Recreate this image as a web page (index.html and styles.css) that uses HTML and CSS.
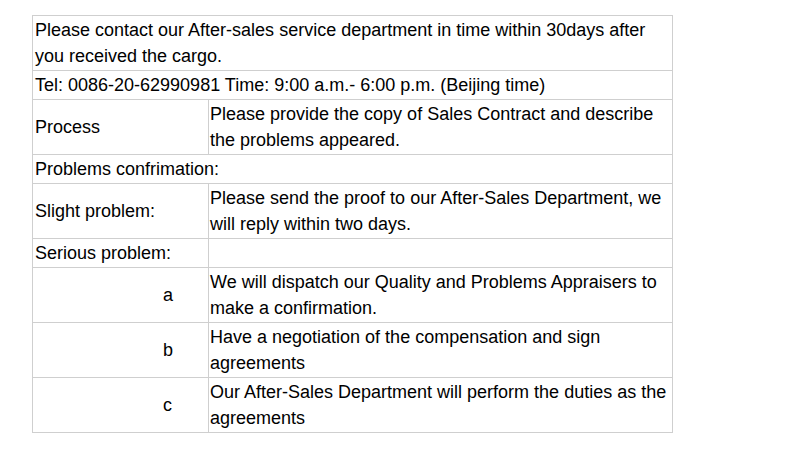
FILE: index.html
```html
<!DOCTYPE html>
<html>
<head>
<meta charset="utf-8">
<link rel="stylesheet" href="styles.css">
</head>
<body>
<table class="info">
  <colgroup><col class="col1"><col class="col2"></colgroup>
  <tr><td colspan="2">Please contact our After-sales service department in time within 30days after you received the cargo.</td></tr>
  <tr><td colspan="2">Tel: 0086-20-62990981 Time: 9:00 a.m.- 6:00 p.m. (Beijing time)</td></tr>
  <tr><td>Process</td><td class="c2">Please provide the copy of Sales Contract and describe the problems appeared.</td></tr>
  <tr><td colspan="2">Problems confrimation:</td></tr>
  <tr><td>Slight problem:</td><td class="c2">Please send the proof to our After-Sales Department, we will reply within two days.</td></tr>
  <tr><td>Serious problem:</td><td class="c2"></td></tr>
  <tr><td class="letter">a</td><td class="c2">We will dispatch our Quality and Problems Appraisers to make a confirmation.</td></tr>
  <tr><td class="letter">b</td><td class="c2">Have a negotiation of the compensation and sign agreements</td></tr>
  <tr><td class="letter">c</td><td class="c2">Our After-Sales Department will perform the duties as the agreements</td></tr>
</table>
</body>
</html>
```
FILE: styles.css
```css
html, body {
  margin: 0;
  padding: 0;
  background: #fff;
}
body {
  padding: 15px 0 0 32px;
  font-family: "Liberation Sans", Arial, sans-serif;
  font-size: 18px;
  color: #000;
}
.info {
  border-collapse: collapse;
  width: 640px;
  table-layout: fixed;
}
.info .col1 {
  width: 176px;
}
.info .col2 {
  width: 464px;
}
.info td {
  border: 1px solid #cfcfcf;
  padding: 1px 2px;
  line-height: 26px;
  vertical-align: middle;
}
.info td.c2 {
  padding-left: 1px;
}
.info td.letter {
  text-align: left;
  padding-left: 130px;
}
```
